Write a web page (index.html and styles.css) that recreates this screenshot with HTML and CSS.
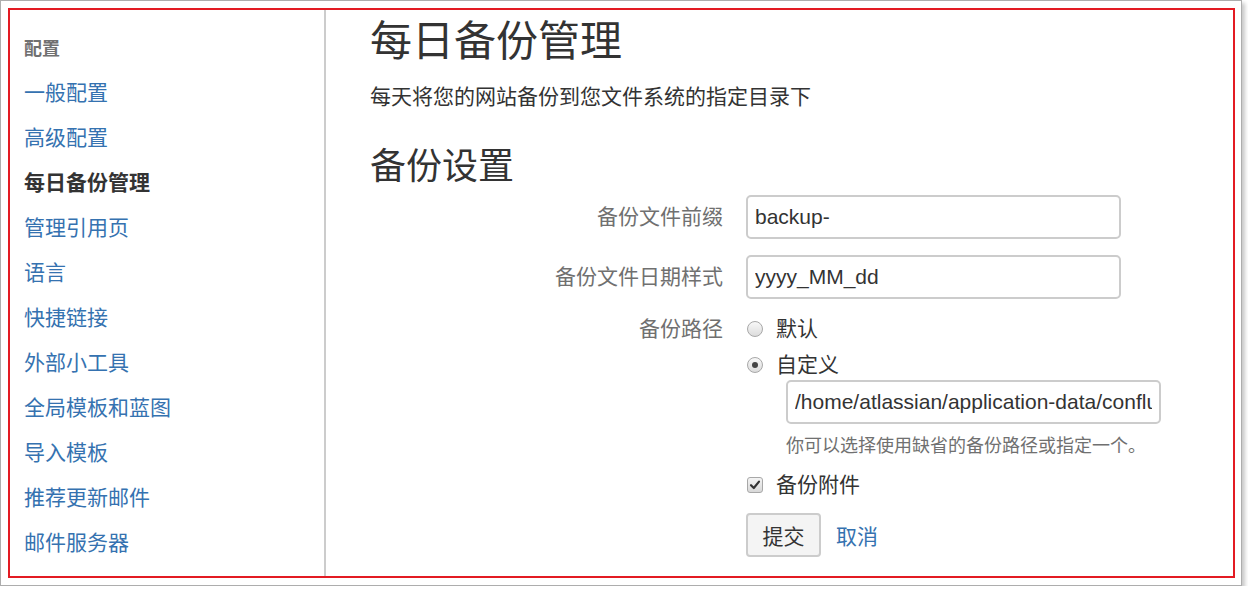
FILE: index.html
```html
<!DOCTYPE html>
<html lang="zh-CN">
<head>
<meta charset="utf-8">
<title>每日备份管理</title>
<link rel="stylesheet" href="styles.css">
</head>
<body>
<div class="frame">
  <div class="highlight">
    <nav class="sidebar">
      <div class="nav-heading">配置</div>
      <ul class="nav-list">
        <li><a href="#">一般配置</a></li>
        <li><a href="#">高级配置</a></li>
        <li class="active">每日备份管理</li>
        <li><a href="#">管理引用页</a></li>
        <li><a href="#">语言</a></li>
        <li><a href="#">快捷链接</a></li>
        <li><a href="#">外部小工具</a></li>
        <li><a href="#">全局模板和蓝图</a></li>
        <li><a href="#">导入模板</a></li>
        <li><a href="#">推荐更新邮件</a></li>
        <li><a href="#">邮件服务器</a></li>
      </ul>
    </nav>
    <main class="content">
      <h1 class="title">每日备份管理</h1>
      <p class="desc">每天将您的网站备份到您文件系统的指定目录下</p>
      <h2 class="subtitle">备份设置</h2>
      <form class="form">
        <label class="label label-input">备份文件前缀</label>
        <div class="field"><input class="text" type="text" value="backup-"></div>

        <label class="label label-input">备份文件日期样式</label>
        <div class="field"><input class="text" type="text" value="yyyy_MM_dd"></div>

        <div class="label label-line">备份路径</div>
        <div class="field">
          <div class="choice"><span class="radio"></span><span>默认</span></div>
          <div class="choice choice-second"><span class="radio checked"></span><span>自定义</span></div>
          <input class="text path" type="text" value="/home/atlassian/application-data/confluence/backups">
          <div class="help">你可以选择使用缺省的备份路径或指定一个。</div>
          <div class="choice check-row">
            <span class="checkbox">
              <svg width="16" height="16" viewBox="0 0 16 16"><path d="M4 8.2 L6.8 11 L12 4.6" fill="none" stroke="#333" stroke-width="2.2" stroke-linecap="round" stroke-linejoin="round"/></svg>
            </span>
            <span>备份附件</span>
          </div>
          <div class="actions">
            <button class="btn" type="button">提交</button>
            <a class="cancel" href="#">取消</a>
          </div>
        </div>
      </form>
    </main>
  </div>
</div>
</body>
</html>
```

FILE: styles.css
```css
html, body {
  margin: 0;
  padding: 0;
  background: #ffffff;
}

body {
  font-family: "Liberation Sans", "Noto Sans CJK SC", sans-serif;
  color: #333333;
}

.frame {
  width: 1227px;
  border: 1px solid #adadad;
  padding: 7px 6px 7px 7px;
  background: #ffffff;
  box-shadow: 3px 3px 4px rgba(0, 0, 0, 0.22);
}

.highlight {
  height: 566px;
  border: 2px solid #e31b23;
  display: flex;
}

.sidebar {
  width: 300px;
  flex: none;
  padding: 19px 0 0 14px;
  border-right: 2px solid #cccccc;
}

.nav-heading {
  font-size: 18px;
  line-height: 41px;
  font-weight: bold;
  color: #707070;
}

.nav-list {
  list-style: none;
  margin: 0;
  padding: 0;
  font-size: 21px;
  line-height: 45px;
}

.nav-list a {
  color: #3572b0;
  text-decoration: none;
}

.nav-list .active {
  color: #333333;
  font-weight: bold;
}

.content {
  flex: 1;
  padding: 7px 0 0 44px;
}

.title {
  margin: 0;
  font-size: 42px;
  line-height: 50px;
  font-weight: normal;
  color: #333333;
}

.desc {
  margin: 15px 0 0;
  font-size: 21px;
  line-height: 30px;
}

.subtitle {
  margin: 33px 0 0;
  font-size: 36px;
  line-height: 44px;
  font-weight: normal;
  color: #333333;
}

.form {
  margin-top: 6px;
  display: grid;
  grid-template-columns: 353px 1fr;
  column-gap: 23px;
  row-gap: 16px;
  font-size: 21px;
}

.label {
  text-align: right;
  color: #707070;
}

.label-input {
  line-height: 44px;
}

.label-line {
  line-height: 28px;
}

.text {
  box-sizing: border-box;
  width: 375px;
  height: 44px;
  margin: 0;
  border: 2px solid #cccccc;
  border-radius: 5px;
  padding: 0 7px;
  font-family: "Liberation Sans", "Noto Sans CJK SC", sans-serif;
  font-size: 21px;
  color: #333333;
  background: #ffffff;
  outline: none;
  display: block;
}

.choice {
  display: flex;
  align-items: center;
  gap: 13px;
  height: 28px;
  line-height: 28px;
  color: #333333;
}

.choice-second {
  margin-top: 8px;
}

.radio {
  box-sizing: border-box;
  width: 16px;
  height: 16px;
  margin-left: 1px;
  border: 1px solid #a8a8a8;
  border-radius: 50%;
  background: linear-gradient(#f8f8f8, #dcdcdc);
  display: flex;
  align-items: center;
  justify-content: center;
}

.radio.checked::after {
  content: "";
  width: 6px;
  height: 6px;
  border-radius: 50%;
  background: #444444;
}

.path {
  margin: 1px 0 0 40px;
}

.help {
  margin: 10px 0 0 40px;
  font-size: 18px;
  line-height: 24px;
  color: #707070;
}

.check-row {
  margin-top: 13px;
}

.checkbox {
  box-sizing: border-box;
  width: 16px;
  height: 16px;
  margin-left: 1px;
  border: 1px solid #a8a8a8;
  border-radius: 3px;
  background: linear-gradient(#f4f4f4, #d8d8d8);
  position: relative;
}

.checkbox svg {
  position: absolute;
  left: -1px;
  top: -1px;
}

.actions {
  margin-top: 14px;
  display: flex;
  align-items: center;
  gap: 15px;
}

.btn {
  box-sizing: border-box;
  width: 75px;
  height: 44px;
  border: 2px solid #cccccc;
  border-radius: 4px;
  background: #f4f4f4;
  font-family: "Liberation Sans", "Noto Sans CJK SC", sans-serif;
  font-size: 21px;
  color: #333333;
  padding: 0;
}

.cancel {
  color: #3572b0;
  text-decoration: none;
  font-size: 21px;
}
```
